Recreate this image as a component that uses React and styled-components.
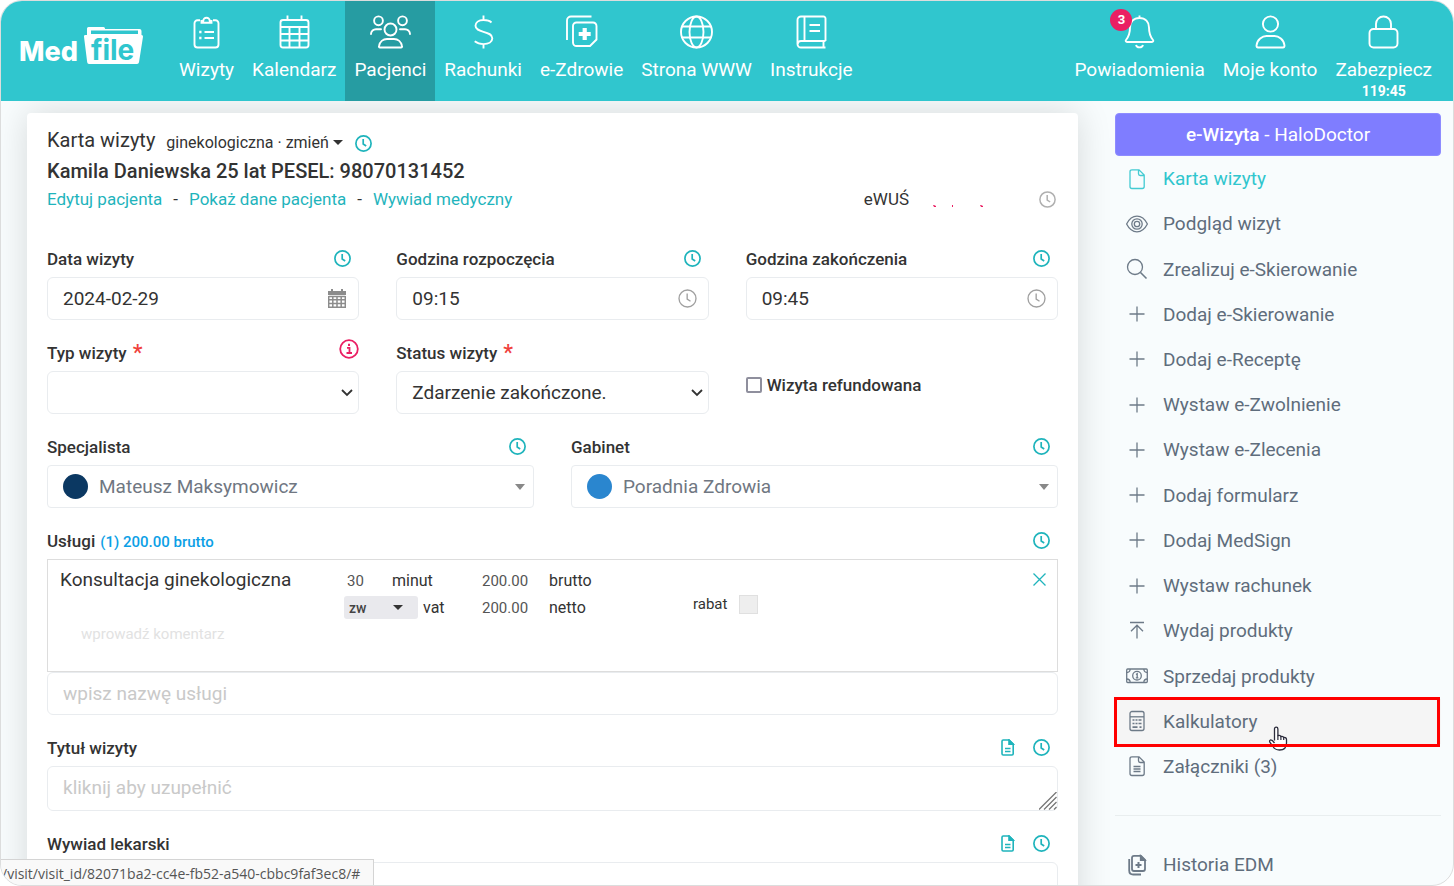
import React from "react";
import styled, { createGlobalStyle, css } from "styled-components";

const color = {
  teal: "#30c6ce",
  tealDark: "#269ca2",
  link: "#1fb4bc",
  pink: "#ea1f63",
  text: "#333333",
  menu: "#5f6d7c",
  border: "#e9ecef",
  muted: "#c9c9c9",
};

const GlobalStyle = createGlobalStyle`
  *, *::before, *::after { box-sizing: border-box; }
  body {
    margin: 0;
    background: #ffffff;
    color: ${color.text};
    font-family: Roboto, "Liberation Sans", sans-serif;
    font-size: 19px;
  }
  button, input, select, textarea { font: inherit; color: inherit; margin: 0; }
  a { text-decoration: none; color: inherit; }
`;

const Frame = styled.div`
  position: relative;
  display: flex;
  flex-direction: column;
  height: 100vh;
  overflow: hidden;
  border: 1px solid #dcdddd;
  border-radius: 22px;
  background: #f8fcfd;
`;

/* ---------- top bar ---------- */

const TopBar = styled.header`
  position: relative;
  z-index: 2;
  display: flex;
  flex: none;
  height: 100px;
  padding: 0 12px 0 18px;
  background: ${color.teal};
  color: #ffffff;
`;

const LogoLink = styled.a`
  display: block;
  margin: 25px 25px 0 0;
  height: 42px;
`;

const Nav = styled.nav`
  display: flex;
  & + & { margin-left: auto; }
`;

const NavItem = styled.a`
  position: relative;
  display: flex;
  flex-direction: column;
  align-items: center;
  padding: 14px 9px 0;
  line-height: 22px;
  white-space: nowrap;
  background: ${(p) => (p.$active ? color.tealDark : "transparent")};
`;

const NavLabel = styled.span`
  margin: 10px 0 1px;
`;

const NavTimer = styled.span`
  font-size: 14px;
  font-weight: 700;
  line-height: 18px;
`;

const Badge = styled.span`
  position: absolute;
  top: 8px;
  left: 45px;
  width: 22px;
  height: 22px;
  border-radius: 50%;
  background: ${color.pink};
  font-size: 13px;
  font-weight: 700;
  line-height: 22px;
  text-align: center;
`;

/* ---------- page body ---------- */

const Body = styled.div`
  display: flex;
  flex: 1;
  min-height: 0;
  gap: 37px;
  padding: 12px 12px 0 26px;
  overflow: hidden auto;
  scrollbar-width: none;
`;

const Card = styled.main`
  flex: 1;
  align-self: flex-start;
  min-width: 0;
  padding: 15px 20px 40px;
  border-radius: 4px;
  background: #ffffff;
  box-shadow: 0 0 35px rgba(0, 0, 0, 0.14);
`;

const TitleRow = styled.div`
  display: flex;
  align-items: center;
  height: 24px;
`;

const Title = styled.h1`
  margin: 0 11px 0 0;
  font-size: 20px;
  font-weight: 400;
`;

const KindButton = styled.button`
  display: flex;
  align-items: center;
  gap: 4px;
  margin-right: 12px;
  padding: 4px 0 0;
  border: 0;
  background: none;
  font-size: 16px;
`;

const PatientName = styled.h2`
  margin: 7px 0 4px;
  font-size: 20px;
  font-weight: 500;
  line-height: 24px;
`;

const LinkRow = styled.div`
  display: flex;
  align-items: center;
  gap: 11px;
  height: 24px;
  margin-bottom: 36px;
  padding-right: 2px;
  font-size: 17px;
`;

const TextLink = styled.a`
  color: ${color.link};
`;

const Insurance = styled.div`
  display: flex;
  align-items: center;
  margin-left: auto;
  gap: 24px;
`;

const Marks = styled.svg`
  margin: 14px 32px 0 0;
`;

const Columns = styled.div`
  display: grid;
  grid-template-columns: repeat(${(p) => p.$count}, minmax(0, 1fr));
  column-gap: 37px;
`;

const Field = styled.div`
  margin-bottom: 21px;
`;

const FieldHead = styled.div`
  display: flex;
  align-items: center;
  height: 23px;
  margin-bottom: 7px;
  padding-right: ${(p) => (p.$flush ? 0 : 8)}px;
  font-size: 17px;
  font-weight: 500;
`;

const Tools = styled.span`
  display: flex;
  align-items: center;
  gap: 17px;
  margin-left: auto;
`;

const IconButton = styled.button`
  display: flex;
  padding: 0;
  border: 0;
  background: none;
  color: ${(p) => p.$tone || color.link};
  margin-top: ${(p) => (p.$lowered ? 6 : 0)}px;
  margin-bottom: ${(p) => (p.$raised ? 8 : 0)}px;
`;

const Required = styled.span`
  margin-left: 6px;
  color: #f0413c;
  font-size: 22px;
  line-height: 20px;
`;

const Total = styled.span`
  margin-left: 5px;
  padding-top: 2px;
  color: #0c9fe6;
  font-size: 15px;
`;

const control = css`
  display: block;
  width: 100%;
  height: 43px;
  padding: 0 15px;
  border: 1px solid ${color.border};
  border-radius: 6px;
  background: #ffffff;
  outline: none;
  &::placeholder { color: ${color.muted}; opacity: 1; }
`;

const Control = styled.div`
  position: relative;
`;

const TextInput = styled.input`
  ${control}
`;

const TextArea = styled.textarea`
  ${control}
  height: 45px;
  padding: 9px 15px;
  line-height: 24px;
  resize: none;
  overflow: hidden;
`;

const SelectInput = styled.select`
  ${control}
  appearance: none;
`;

const Adornment = styled.span`
  position: absolute;
  top: 0;
  bottom: 0;
  right: ${(p) => p.$right}px;
  display: flex;
  align-items: center;
  color: #a0a0a0;
  pointer-events: none;
`;

const ResizeGrip = styled.svg`
  position: absolute;
  right: 1px;
  bottom: 1px;
`;

const PersonBox = styled.div`
  display: flex;
  align-items: center;
  gap: 11px;
  height: 43px;
  padding: 0 8px 0 15px;
  border: 1px solid ${color.border};
  border-radius: 4px;
  color: #707782;
`;

const Dot = styled.span`
  flex: none;
  width: 25px;
  height: 25px;
  border-radius: 50%;
  background: ${(p) => p.$fill};
`;

const PlainSelect = styled.select`
  flex: 1;
  min-width: 0;
  padding: 0;
  border: 0;
  background: none;
  appearance: none;
`;

const CheckLabel = styled.label`
  display: flex;
  align-items: center;
  gap: 5px;
  height: 23px;
  margin-top: 32px;
  font-size: 17px;
  font-weight: 500;
`;

const CheckBox = styled.input`
  appearance: none;
  width: 16px;
  height: 16px;
  border: 2px solid #8f8f9d;
  border-radius: 2px;
  background: #ffffff;
`;

/* ---------- services ---------- */

const ServiceBox = styled.div`
  height: 113px;
  padding: 7px 11px 0 12px;
  border: 1px solid #dddddd;
`;

const ServiceLine = styled.div`
  display: flex;
  height: 55px;
  font-size: 16px;
`;

const ServiceName = styled.div`
  width: 284px;
  font-size: 19px;
  line-height: 26px;
`;

const ServiceColumn = styled.div`
  width: ${(p) => p.$width}px;
`;

const ServiceCell = styled.div`
  display: flex;
  align-items: center;
  height: 27px;
`;

const NumberInput = styled.input`
  width: ${(p) => p.$width}px;
  padding: 0 0 0 ${(p) => p.$indent || 0}px;
  border: 0;
  background: none;
  color: #555555;
  font-size: 15px;
`;

const VatBox = styled.span`
  position: relative;
  margin-right: 5px;
`;

const VatSelect = styled.select`
  display: block;
  width: 74px;
  height: 23px;
  padding: 0 5px;
  border: 0;
  border-radius: 3px;
  background: #e9e9ed;
  color: #444444;
  font-size: 14px;
  font-weight: 500;
  appearance: none;
`;

const Discount = styled.label`
  display: flex;
  align-items: center;
  gap: 12px;
  height: 24px;
  margin-top: 25px;
  font-size: 15px;
`;

const DiscountBox = styled.input`
  appearance: none;
  width: 19px;
  height: 19px;
  border: 1px solid #e0e0e0;
  background: #eeeeee;
`;

const RemoveButton = styled(IconButton)`
  margin: 6px 0 0 auto;
  align-self: flex-start;
`;

const CommentInput = styled.input`
  display: block;
  width: 60%;
  height: 24px;
  padding: 0 21px;
  border: 0;
  background: none;
  font-size: 15px;
  &::placeholder { color: #e2e2e2; opacity: 1; }
`;

/* ---------- side menu ---------- */

const Side = styled.aside`
  flex: none;
  width: 326px;
`;

const CallButton = styled.button`
  display: block;
  width: 100%;
  height: 43px;
  border: 1px solid #8e8cff;
  border-radius: 4px;
  background: #7f7dff;
  color: #ffffff;
  b { font-weight: 500; }
`;

const Menu = styled.nav`
  display: flex;
  flex-direction: column;
  min-height: 633px;
`;

const MenuItem = styled.a`
  position: relative;
  display: flex;
  flex: 1 0 auto;
  align-items: center;
  gap: 15px;
  min-height: 45px;
  padding-left: 11px;
  color: ${(p) => (p.$active ? color.teal : color.menu)};
  ${(p) =>
    p.$marked &&
    css`
      background: #f5f5f5;
      &::after {
        content: "";
        position: absolute;
        inset: -2px 1px -3px -1px;
        border: 3px solid #ff0000;
      }
    `}
`;

const MenuIcon = styled.svg`
  flex: none;
  width: 22px;
  height: 22px;
  opacity: 0.9;
`;

const Pointer = styled.svg`
  position: absolute;
  left: 153px;
  top: 27px;
`;

const Divider = styled.hr`
  height: 1px;
  margin: 26px 0;
  border: 0;
  background: #e9eeef;
`;

const StatusBar = styled.div`
  position: absolute;
  left: 0;
  bottom: 0;
  z-index: 3;
  height: 26px;
  padding: 0 13px 0 1px;
  border: solid #d4d4d4;
  border-width: 1px 1px 0 0;
  background: #f9f9f9;
  color: #555555;
  font-family: "Open Sans", "Noto Sans", sans-serif;
  font-size: 14px;
  line-height: 27px;
`;

/* ---------- drawings ---------- */

const Logo = () => (
  <svg width="126" height="42" viewBox="0 0 126 42" role="img" aria-label="MedFile">
    <text x="0" y="35" fill="#fff" fontFamily="Inter, sans-serif" fontWeight="800" fontSize="27">Med</text>
    <path d="M68 9V2.500q0-1.500 1.500-1.500h15q1.500 0 1.500 1.500V3h34.500q2 0 2 2v4z" fill="#fff" />
    <path d="M72 8V4.500h47V8z" fill={color.teal} />
    <path d="M66 9h56.500q1.800 0 1.500 1.800l-4 25.400q-.3 1.800-2 1.800H70q-1.600 0-1.800-1.800L65 10.800Q64.800 9 66 9z" fill="#fff" />
    <text x="72" y="34" fill={color.teal} fontFamily="Inter, sans-serif" fontWeight="700" fontSize="28">file</text>
  </svg>
);

const navIcons = {
  clipboard: (
    <>
      <path d="M10 4.800H7.500A3 3 0 0 0 4.500 7.800V29a3 3 0 0 0 3 3h18a3 3 0 0 0 3-3V7.800a3 3 0 0 0-3-3H23" />
      <path d="M11.500 7.200h10V5.500H19.800a3.300 3.300 0 0 0-6.600 0H11.500z" />
      <path d="M14.500 16.500H24M14.500 22.500H24" />
      <path d="M9.200 16.500h2.300M9.200 22.500h2.300" strokeWidth="2.600" />
    </>
  ),
  calendar: (
    <>
      <rect x="2.500" y="4.500" width="28" height="27.500" rx="2.500" />
      <path d="M9.500 0v4.500M23.500 0v4.500M2.500 11.500h28M2.500 18.500h28M2.500 25h28M11.500 11.500V32M21.500 11.500V32" />
    </>
  ),
  dollar: (
    <path d="M16.500 0v4.500M16.500 28.500V33M24.500 7C22.500 5 19.500 4.500 16.500 4.500c-5 0-8 2.500-8 5.800 0 3.700 3.500 4.800 8 6 5 1.300 8.800 2.500 8.800 6.500 0 3.500-3.600 5.800-8.800 5.800-3.500 0-6.500-1-8.800-2.800" />
  ),
  health: (
    <>
      <path d="M2 24.500V5a4 4 0 0 1 4-4h20.500" />
      <path d="M11.500 7H28a3.500 3.500 0 0 1 3.500 3.500V24l-6.500 6.500H11.500A3.500 3.500 0 0 1 8 27V10.500A3.500 3.500 0 0 1 11.500 7z" />
      <path d="M19.700 12.500v12M13.700 18.500h12" strokeWidth="4.200" />
    </>
  ),
  globe: (
    <>
      <circle cx="16.500" cy="16.500" r="15.500" />
      <ellipse cx="16.500" cy="16.500" rx="7" ry="15.500" />
      <path d="M2 11h29M2 22h29" />
    </>
  ),
  book: (
    <path d="M30.500 25.500V3a2 2 0 0 0-2-2H6A3.500 3.500 0 0 0 2.500 4.500v24A3.500 3.500 0 0 0 6 32h24.500M9.500 1v24.500M30.500 25.500H6a3.300 3.300 0 0 0-3.300 3M28.500 25.500V32M14.500 9.500h10.500M14.500 15.500h10.500" />
  ),
  bell: (
    <>
      <path d="M16.500 0v2.500M16.500 2.500c-6 0-9.500 4-9.500 9.500 0 7-1.500 9.500-4 12.500-.8 1 0 2 1 2h25c1 0 1.800-1 1-2-2.500-3-4-5.500-4-12.500 0-5.500-3.500-9.500-9.500-9.500z" />
      <path d="M13 29.500c.8 3.200 6.200 3.200 7 0" />
    </>
  ),
  user: (
    <>
      <circle cx="16.500" cy="8.500" r="7.600" />
      <path d="M4 32C2.800 32 2.500 31 2.500 30c.5-6 6-9.500 10-9.500h8c4 0 9.500 3.500 10 9.500 0 1-.3 2-1.500 2z" />
    </>
  ),
  lock: (
    <>
      <rect x="2.500" y="13.500" width="28" height="18.500" rx="4" />
      <path d="M9 13.500V8.500a7.500 7.500 0 0 1 15 0v5" />
    </>
  ),
};

const NavIcon = ({ name }) =>
  name === "people" ? (
    <svg width="41" height="34" viewBox="0 0 41 33" fill="none" stroke="#fff" strokeWidth="1.900" strokeLinecap="round">
      <circle cx="20.500" cy="14" r="6" />
      <circle cx="8.500" cy="5.300" r="4.400" />
      <circle cx="32.500" cy="5.300" r="4.400" />
      <path d="M1 18.500c0-3 2.500-4.800 5-4.800h5M40 18.500c0-3-2.500-4.800-5-4.800h-5" />
      <path d="M10 32c-1 0-1.200-.8-1-1.500.8-4 4-7 8-7h7c4 0 7.200 3 8 7 .2.700 0 1.500-1 1.500z" />
    </svg>
  ) : (
    <svg width="33" height="34" viewBox="0 0 33 33" fill="none" stroke="#fff" strokeWidth="1.900">
      {navIcons[name]}
    </svg>
  );

const ClockIcon = ({ size = 17, weight = 1.7 }) => (
  <svg width={size} height={size} viewBox="0 0 17 17" fill="none" stroke="currentColor" strokeWidth={weight}>
    <circle cx="8.500" cy="8.500" r="7.600" />
    <path d="M8.200 4v5l3 2" />
  </svg>
);

const NoteIcon = () => (
  <svg width="17" height="17" viewBox="0 0 17 17" fill="none" stroke="currentColor" strokeWidth="1.600">
    <path d="M3 2.200Q3 1 4.200 1H10l4.200 4.200v9.600q0 1.200-1.200 1.200H4.200Q3 16 3 14.800zM6 9.500h5.500M6 12.500h5.500" />
    <path d="M10 1v4.200h4.200z" fill="currentColor" />
  </svg>
);

const InfoIcon = () => (
  <svg width="20" height="20" viewBox="0 0 20 20" fill="none" stroke="currentColor" strokeWidth="1.800">
    <circle cx="10" cy="10" r="8.800" />
    <path d="M8 8.800h2.500v5M7.500 14h5.500" />
    <path d="M9 5.800h2" strokeWidth="2.200" />
  </svg>
);

const DateIcon = () => (
  <svg width="18" height="19" viewBox="0 0 18 19" fill="#8c8c8c">
    <path d="M0 2h18v4H0zM3 0h2v3H3zM13 0h2v3h-2z" />
    <path d="M.7 7v11.300h16.600V7M.7 10.800h16.600M.7 14.600h16.600M4.800 7v11.500M9 7v11.500M13.200 7v11.500M.7 7.500h16.600" fill="none" stroke="#8c8c8c" strokeWidth="1.500" />
  </svg>
);

const Chevron = () => (
  <svg width="12" height="8" viewBox="0 0 12 8" fill="none" stroke="#333" strokeWidth="1.800">
    <path d="M1 1l5 5 5-5" />
  </svg>
);

const Caret = ({ fill = "#333", width = 10, height = 5 }) => (
  <svg width={width} height={height} viewBox="0 0 10 5" preserveAspectRatio="none" fill={fill}>
    <path d="M0 0h10L5 5z" />
  </svg>
);

const CrossIcon = () => (
  <svg width="13" height="13" viewBox="0 0 13 13" stroke="currentColor" strokeWidth="1.300">
    <path d="M.5.500l12 12M12.500.500l-12 12" />
  </svg>
);

const menuIcons = {
  plus: <path d="M11 3.500v15M3.500 11h15" />,
  file: <path d="M6 1.800h7l5.200 5.200v11.500q0 2-2 2H6q-2 0-2-2V3.800q0-2 2-2zM12.500 1.800v4q0 1.700 1.700 1.700h4" />,
  eye: (
    <>
      <path d="M.6 11C3 6.300 6.500 3.200 11 3.200S19 6.300 21.400 11C19 15.700 15.500 18.800 11 18.800S3 15.700.6 11z" />
      <circle cx="11" cy="11" r="5.200" />
      <circle cx="11" cy="11" r="2.700" />
    </>
  ),
  search: (
    <>
      <circle cx="9" cy="9" r="7.500" />
      <path d="M14.500 14.500l6 6" strokeWidth="1.600" />
    </>
  ),
  upload: <path d="M4 2.500h14M11 18.500V5.500M5 11.200l6-6 6 6" />,
  money: (
    <>
      <rect x=".7" y="4" width="20.600" height="13.500" rx="1" />
      <circle cx="11" cy="10.700" r="4.300" />
      <path d="M10 9.500l1.200-.8v4M9.800 12.800h2.600M.7 7.500Q4 7.500 4.200 4M21.300 7.500Q18 7.500 17.800 4M.7 14q3.300 0 3.500 3.500M21.300 14q-3.300 0-3.500 3.500" />
    </>
  ),
  calculator: (
    <>
      <rect x="4" y="1.500" width="14" height="19" rx="2" />
      <path d="M4 6.800h14" />
      <path d="M6.500 10h2M9.500 10h2M12.500 10h3M6.500 13.500h2M9.500 13.500h2M12.500 13.500h3M6.500 17.200h5M13.500 17.200h2" strokeWidth="1.700" />
    </>
  ),
  attachment: (
    <path d="M6 1.800h7l5.200 5.200v11.500q0 2-2 2H6q-2 0-2-2V3.800q0-2 2-2zM12.500 1.800v4q0 1.700 1.700 1.700h4M7.500 11.500h7M7.500 14h7M7.500 16.500h7" />
  ),
  history: (
    <>
      <path d="M3.200 5v11.500q0 4 4 4H15" strokeWidth="1.800" />
      <path d="M8 1.800h7l4 4V15q0 2-2 2H8q-2 0-2-2V3.800q0-2 2-2z" strokeWidth="1.800" />
      <path d="M14.500 1.500v4.800h4.800z" fill="currentColor" />
      <path d="M12.500 8v6M9.500 11h6" strokeWidth="2" />
    </>
  ),
};

const topLeft = [
  ["clipboard", "Wizyty"],
  ["calendar", "Kalendarz"],
  ["people", "Pacjenci"],
  ["dollar", "Rachunki"],
  ["health", "e-Zdrowie"],
  ["globe", "Strona WWW"],
  ["book", "Instrukcje"],
];

const topRight = [
  ["bell", "Powiadomienia", { badge: "3" }],
  ["user", "Moje konto", {}],
  ["lock", "Zabezpiecz", { timer: "119:45" }],
];

const menu = [
  ["file", "Karta wizyty"],
  ["eye", "Podgląd wizyt"],
  ["search", "Zrealizuj e-Skierowanie"],
  ["plus", "Dodaj e-Skierowanie"],
  ["plus", "Dodaj e-Receptę"],
  ["plus", "Wystaw e-Zwolnienie"],
  ["plus", "Wystaw e-Zlecenia"],
  ["plus", "Dodaj formularz"],
  ["plus", "Dodaj MedSign"],
  ["plus", "Wystaw rachunek"],
  ["upload", "Wydaj produkty"],
  ["money", "Sprzedaj produkty"],
  ["calculator", "Kalkulatory"],
  ["attachment", "Załączniki (3)"],
];

const MenuGlyph = ({ name }) => (
  <MenuIcon viewBox="0 0 22 22" fill="none" stroke="currentColor" strokeWidth="1.300" aria-hidden="true">
    {menuIcons[name]}
  </MenuIcon>
);

const HandPointer = () => (
  <Pointer width="20" height="26" viewBox="0 0 20 26" aria-hidden="true">
    <path
      d="M6.500 14.500V3q0-1.800 1.700-1.800T9.900 3v6.500q2.600-.6 3 1 2.400-.5 2.800 1 2.800-.3 2.800 2V17q0 7-7 7-4.500 0-6.500-3.500L2 16.500Q1 14.500 2.500 14q1.500-.3 4 3"
      fill="#fff"
      stroke="#2b2b3b"
      strokeWidth="1.300"
    />
    <path d="M9.900 9.500V14M12.900 10.500V14M15.700 11.500V14" stroke="#2b2b3b" strokeWidth="1.200" />
  </Pointer>
);

const History = ({ size, weight, tone, lowered }) => (
  <IconButton type="button" aria-label="Historia zmian" $tone={tone} $lowered={lowered}>
    <ClockIcon size={size} weight={weight} />
  </IconButton>
);

const Head = ({ id, label, required, total, note, info, plain }) => (
  <FieldHead $flush={info}>
    <label htmlFor={id}>{label}</label>
    {required && <Required>*</Required>}
    {total && <Total>{total}</Total>}
    <Tools>
      {note && (
        <IconButton type="button" aria-label="Szablony">
          <NoteIcon />
        </IconButton>
      )}
      {info && (
        <IconButton type="button" aria-label="Informacja" $tone={color.pink} $raised>
          <InfoIcon />
        </IconButton>
      )}
      {!info && !plain && <History />}
    </Tools>
  </FieldHead>
);

const PersonField = ({ id, label, fill, value }) => (
  <Field>
    <Head id={id} label={label} />
    <PersonBox>
      <Dot $fill={fill} />
      <PlainSelect id={id} defaultValue={value}>
        <option>{value}</option>
      </PlainSelect>
      <Caret fill="#888" height={6} />
    </PersonBox>
  </Field>
);

const NoteField = ({ id, label, placeholder }) => (
  <Field>
    <Head id={id} label={label} note />
    <Control>
      <TextArea id={id} placeholder={placeholder} />
      <ResizeGrip width="18" height="18" viewBox="0 0 18 18" stroke="#777" strokeWidth="1.300">
        <path d="M0 17.500L17.500 0M5 17.500L17.500 5M10 17.500l7.500-7.500M15 17.500l2.500-2.500" />
      </ResizeGrip>
    </Control>
  </Field>
);

export default function App() {
  return (
    <Frame>
      <GlobalStyle />
      <TopBar>
        <LogoLink href="#"><Logo /></LogoLink>
        <Nav>
          {topLeft.map(([icon, label]) => (
            <NavItem key={label} href="#" $active={label === "Pacjenci"}>
              <NavIcon name={icon} />
              <NavLabel>{label}</NavLabel>
            </NavItem>
          ))}
        </Nav>
        <Nav>
          {topRight.map(([icon, label, extra]) => (
            <NavItem key={label} href="#">
              <NavIcon name={icon} />
              {extra.badge && <Badge>{extra.badge}</Badge>}
              <NavLabel>{label}</NavLabel>
              {extra.timer && <NavTimer>{extra.timer}</NavTimer>}
            </NavItem>
          ))}
        </Nav>
      </TopBar>

      <Body>
        <Card>
          <TitleRow>
            <Title>Karta wizyty</Title>
            <KindButton type="button">
              ginekologiczna · zmień <Caret />
            </KindButton>
            <History lowered />
          </TitleRow>
          <PatientName>Kamila Daniewska 25 lat PESEL: 98070131452</PatientName>
          <LinkRow>
            <TextLink href="#">Edytuj pacjenta</TextLink>-
            <TextLink href="#">Pokaż dane pacjenta</TextLink>-
            <TextLink href="#">Wywiad medyczny</TextLink>
            <Insurance>
              eWUŚ
              <Marks width="50" height="4" viewBox="0 0 50 4" fill={color.pink} aria-hidden="true">
                <path d="M0 1h1l2 1v1H1zM19 1h1v2h-1zM47 1h1l2 1v1h-2z" />
              </Marks>
              <History tone="#b0b0b0" weight={1.5} />
            </Insurance>
          </LinkRow>

          <Columns $count={3}>
            <Field>
              <Head id="date" label="Data wizyty" />
              <Control>
                <TextInput id="date" defaultValue="2024-02-29" />
                <Adornment $right={13}><DateIcon /></Adornment>
              </Control>
            </Field>
            <Field>
              <Head id="start" label="Godzina rozpoczęcia" />
              <Control>
                <TextInput id="start" defaultValue="09:15" />
                <Adornment $right={12}><ClockIcon size={19} weight={1.2} /></Adornment>
              </Control>
            </Field>
            <Field>
              <Head id="end" label="Godzina zakończenia" />
              <Control>
                <TextInput id="end" defaultValue="09:45" />
                <Adornment $right={12}><ClockIcon size={19} weight={1.2} /></Adornment>
              </Control>
            </Field>
            <Field>
              <Head id="kind" label="Typ wizyty" required info />
              <Control>
                <SelectInput id="kind"><option></option></SelectInput>
                <Adornment $right={6}><Chevron /></Adornment>
              </Control>
            </Field>
            <Field>
              <Head id="status" label="Status wizyty" required plain />
              <Control>
                <SelectInput id="status"><option>Zdarzenie zakończone.</option></SelectInput>
                <Adornment $right={6}><Chevron /></Adornment>
              </Control>
            </Field>
            <CheckLabel>
              <CheckBox type="checkbox" />
              Wizyta refundowana
            </CheckLabel>
          </Columns>

          <Columns $count={2}>
            <PersonField id="doctor" label="Specjalista" fill="#0b3862" value="Mateusz Maksymowicz" />
            <PersonField id="office" label="Gabinet" fill="#2a86cf" value="Poradnia Zdrowia" />
          </Columns>

          <Field>
            <Head id="service" label="Usługi" total="(1) 200.00 brutto" />
            <ServiceBox>
              <ServiceLine>
                <ServiceName>Konsultacja ginekologiczna</ServiceName>
                <ServiceColumn $width={138}>
                  <ServiceCell>
                    <NumberInput aria-label="Czas" $width={48} $indent={3} defaultValue="30" />
                    minut
                  </ServiceCell>
                  <ServiceCell>
                    <VatBox>
                      <VatSelect aria-label="Stawka vat"><option>zw</option></VatSelect>
                      <Adornment $right={15}><Caret /></Adornment>
                    </VatBox>
                    vat
                  </ServiceCell>
                </ServiceColumn>
                <ServiceColumn $width={211}>
                  <ServiceCell>
                    <NumberInput aria-label="Cena brutto" $width={67} defaultValue="200.00" />
                    brutto
                  </ServiceCell>
                  <ServiceCell>
                    <NumberInput aria-label="Cena netto" $width={67} defaultValue="200.00" />
                    netto
                  </ServiceCell>
                </ServiceColumn>
                <Discount>
                  rabat
                  <DiscountBox type="checkbox" disabled />
                </Discount>
                <RemoveButton type="button" aria-label="Usuń usługę"><CrossIcon /></RemoveButton>
              </ServiceLine>
              <CommentInput aria-label="Komentarz" placeholder="wprowadź komentarz" />
            </ServiceBox>
            <TextInput id="service" placeholder="wpisz nazwę usługi" />
          </Field>

          <NoteField id="subject" label="Tytuł wizyty" placeholder="kliknij aby uzupełnić" />
          <NoteField id="interview" label="Wywiad lekarski" placeholder="" />
        </Card>

        <Side>
          <CallButton type="button"><b>e-Wizyta</b> - HaloDoctor</CallButton>
          <Menu>
            {menu.map(([icon, label]) => (
              <MenuItem key={label} href="#" $active={label === "Karta wizyty"} $marked={label === "Kalkulatory"}>
                <MenuGlyph name={icon} />
                {label}
                {label === "Kalkulatory" && <HandPointer />}
              </MenuItem>
            ))}
          </Menu>
          <Divider />
          <MenuItem href="#">
            <MenuGlyph name="history" />
            Historia EDM
          </MenuItem>
        </Side>
      </Body>

      <StatusBar>/visit/visit_id/82071ba2-cc4e-fb52-a540-cbbc9faf3ec8/#</StatusBar>
    </Frame>
  );
}
